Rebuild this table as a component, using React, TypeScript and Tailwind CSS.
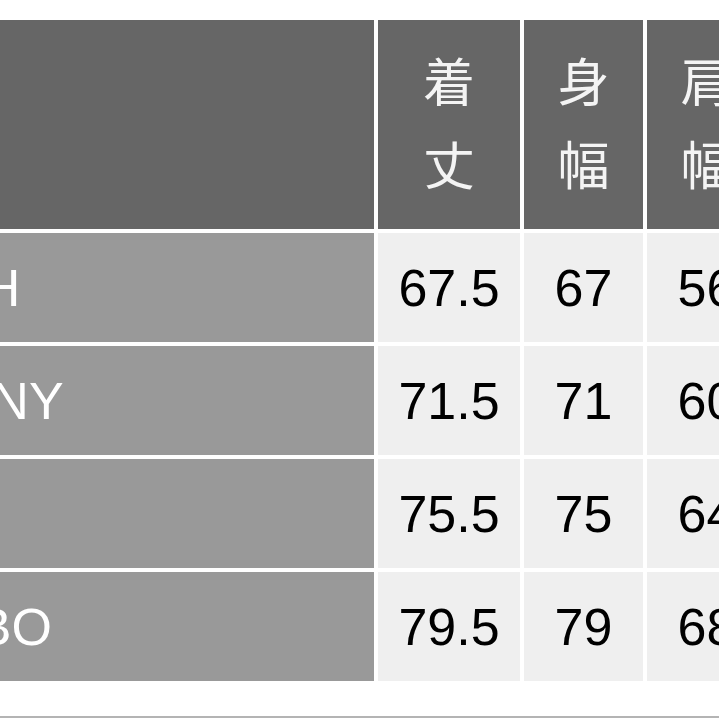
const headers = [
  ["着", "丈"],
  ["身", "幅"],
  ["肩", "幅"],
]

const rows = [
  { label: "MESH", values: ["67.5", "67", "56"] },
  { label: "SKINNY", values: ["71.5", "71", "60"] },
  { label: "BIG", values: ["75.5", "75", "64"] },
  { label: "JUMBO", values: ["79.5", "79", "68"] },
]

const cols = "grid grid-cols-[374px_142px_119px_119px] gap-x-[4px]"

export default function App() {
  return (
    <div className="w-[719px] h-[719px] overflow-hidden bg-white flex flex-col">
      <div className="pt-[20px] flex flex-col gap-y-[4px] w-[780px]">
        {/* header */}
        <div className={`${cols} h-[209px]`}>
          <div className="bg-[#666666]" />
          {headers.map((h, i) => (
            <div
              key={i}
              className="bg-[#666666] flex flex-col items-center justify-center pb-[8px] text-[#f4f4f4] text-[52px] leading-[83px] font-['Noto_Sans_CJK_JP',sans-serif]"
            >
              {h.map((c, j) => (
                <span key={j}>{c}</span>
              ))}
            </div>
          ))}
        </div>

        {/* body */}
        {rows.map((r) => (
          <div key={r.label} className={`${cols} h-[109px]`}>
            <div className="bg-[#999999] overflow-hidden flex items-center">
              <span className="ml-[-130px] whitespace-nowrap text-white text-[52px] leading-none font-['Liberation_Sans',Arial,sans-serif]">
                {r.label}
              </span>
            </div>
            {r.values.map((v, i) => (
              <div
                key={i}
                className="bg-[#efefef] flex items-center justify-center text-black text-[52px] leading-none font-['Liberation_Sans',Arial,sans-serif]"
              >
                {v}
              </div>
            ))}
          </div>
        ))}
      </div>
      <div className="mt-[35px] h-[2px] bg-[#b4b4b4]" />
    </div>
  )
}
